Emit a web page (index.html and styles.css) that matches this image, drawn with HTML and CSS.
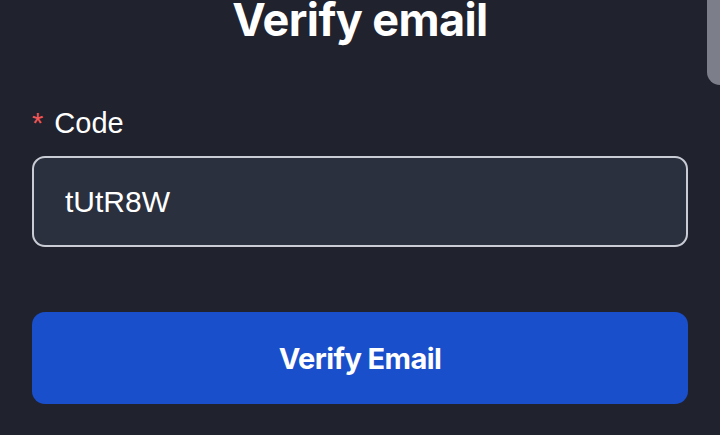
FILE: index.html
```html
<!DOCTYPE html>
<html lang="en">
<head>
	<meta charset="UTF-8">
	<title>Verify email</title>
	<link rel="stylesheet" href="styles.css">
</head>
<body>
	<div class="edge"></div>
	<div class="page">
		<h1 class="title">Verify email</h1>
		<form class="form">
			<label class="label" for="code"><span class="req">*</span> Code</label>
			<input class="input" id="code" type="text" value="tUtR8W">
			<button class="btn" type="button">Verify Email</button>
		</form>
	</div>
</body>
</html>
```

FILE: styles.css
```css
html,body{
	margin:0;
	height:100%;
}
body{
	background:#20222e;
	color:#fff;
	overflow:hidden;
	position:relative;
}
.edge{
	position:absolute;
	top:0;
	right:0;
	width:13px;
	height:85px;
	background:#7c7f89;
	border-bottom-left-radius:14px;
}
.page{
	padding:0 32px;
}
.title{
	margin:-10px 0 0;
	text-align:center;
	font:700 45px/60px Inter,sans-serif;
	letter-spacing:-0.6px;
}
.form{
	display:flex;
	flex-direction:column;
	margin-top:56px;
}
.label{
	font:29px/34px "Liberation Sans",Arial,sans-serif;
	color:#fff;
}
.req{
	color:#f25555;
	margin-right:3px;
}
.input{
	margin-top:16px;
	height:91px;
	box-sizing:border-box;
	background:#2b303e;
	border:2px solid #c9ccd5;
	border-radius:13px;
	padding:0 31px;
	color:#fff;
	font:30px "Liberation Sans",Arial,sans-serif;
	outline:none;
}
.btn{
	margin-top:65px;
	height:92px;
	background:#1a4fcb;
	border:0;
	border-radius:13px;
	color:#fff;
	font:700 29px Inter,sans-serif;
	letter-spacing:-0.6px;
}
```
